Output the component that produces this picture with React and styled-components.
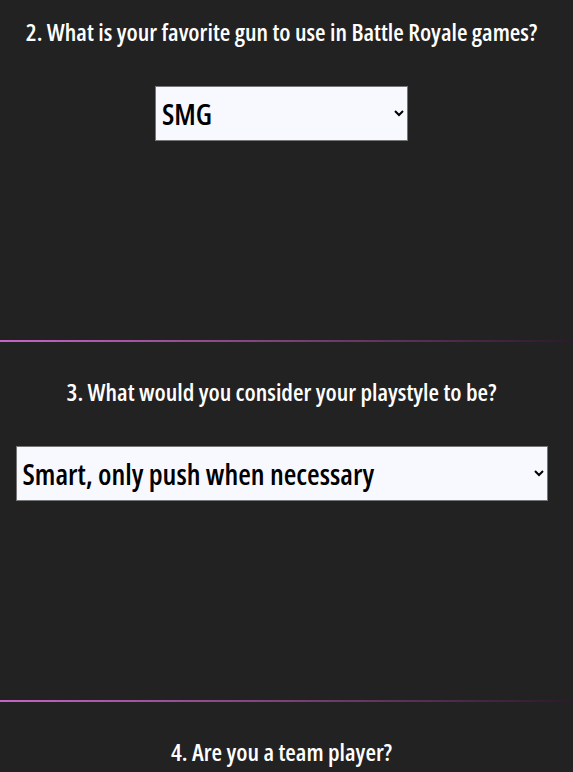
import React from "react";
import styled, { createGlobalStyle } from "styled-components";

const GlobalStyle = createGlobalStyle`
  html, body { margin: 0; padding: 0; background: #222222; }
  body { font-family: "Open Sans", "Roboto Condensed", sans-serif; font-stretch: condensed; }
`;

const Page = styled.main`
  width: 573px;
  overflow: hidden;
`;

const Section = styled.section`
  display: flex;
  flex-direction: column;
  align-items: center;
  padding: ${(p) => (p.$first ? "14px" : "32px")} 10px 199px 0;
`;

const Heading = styled.h2`
  margin: 0;
  font-family: "Open Sans", sans-serif;
  font-stretch: condensed;
  font-weight: 600;
  font-size: 24.2px;
  line-height: 35px;
  color: #ffffff;
  white-space: nowrap;
  text-align: center;
`;

const Select = styled.select`
  margin-top: 37px;
  box-sizing: border-box;
  width: ${(p) => p.$w};
  height: 55px;
  background: #f8f8ff;
  color: #000000;
  border: 1px solid #767676;
  border-radius: 0;
  font-family: "Open Sans", sans-serif;
  font-stretch: condensed;
  font-weight: 600;
  font-size: 29px;
  padding: 0 4px 0 2px;
`;

const Divider = styled.hr`
  margin: 0;
  border: 0;
  height: 2px;
  width: 100%;
  background: linear-gradient(to right, #c864c8 0%, #7a4276 50%, #2c1a2c 100%);
`;

export default function App() {
  return (
    <Page>
      <GlobalStyle />
      <Section $first>
        <Heading>2. What is your favorite gun to use in Battle Royale games?</Heading>
        <Select $w="253px" defaultValue="smg">
          <option value="ar">Assault Rifle</option>
          <option value="smg">SMG</option>
          <option value="sniper">Sniper</option>
          <option value="shotgun">Shotgun</option>
        </Select>
      </Section>
      <Divider />
      <Section>
        <Heading>3. What would you consider your playstyle to be?</Heading>
        <Select $w="532px" defaultValue="smart">
          <option value="aggressive">Aggressive, always pushing</option>
          <option value="smart">Smart, only push when necessary</option>
          <option value="passive">Passive, hide until the end</option>
        </Select>
      </Section>
      <Divider />
      <Section>
        <Heading>4. Are you a team player?</Heading>
      </Section>
    </Page>
  );
}
